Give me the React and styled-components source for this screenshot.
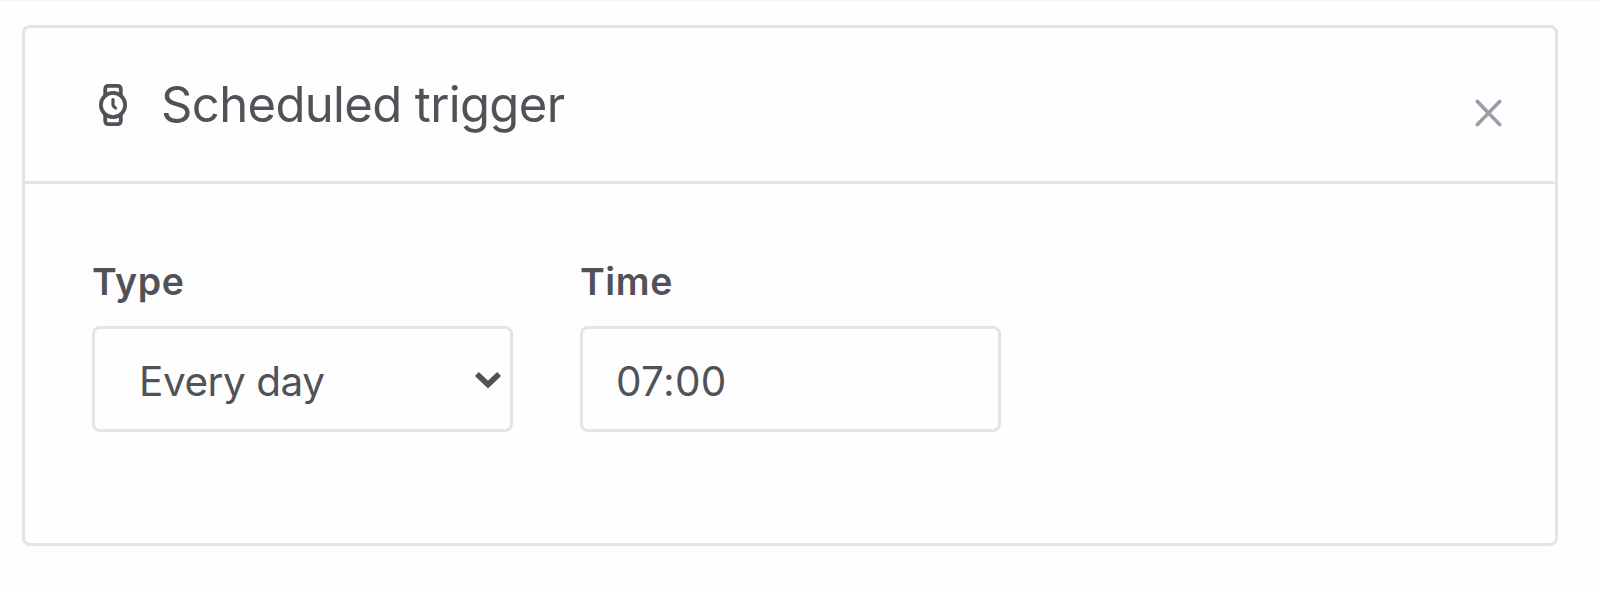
import React from "react";
import styled, { createGlobalStyle } from "styled-components";

const GlobalStyle = createGlobalStyle`
  *, *::before, *::after { box-sizing: border-box; }
  body {
    margin: 0;
    background: #fefefe;
    color: #505258;
    font-family: Inter, "Liberation Sans", sans-serif;
  }
`;

const Page = styled.main`
  height: 591px;
  padding: 24px 42px 0 22px;
  border-top: 1px solid #f6f6f6;
  border-bottom: 1px solid #f8f8f8;
`;

const Card = styled.section`
  height: 521px;
  border: 3px solid #e3e4e8;
  border-radius: 8px;
`;

const CardHeader = styled.header`
  display: flex;
  align-items: center;
  height: 156px;
  padding: 1px 52px 0 72px;
  border-bottom: 3px solid #e3e4e8;
`;

const Title = styled.h1`
  flex: 1;
  margin: 0 0 0 32px;
  font-size: 49px;
  font-weight: 400;
  line-height: 60px;
  letter-spacing: ${(p) => p.$tracking};
  white-space: nowrap;
`;

const CloseButton = styled.button`
  display: flex;
  margin: 15px 0 0;
  padding: 0;
  border: 0;
  background: none;
  color: #9c9da8;
`;

const Fields = styled.div`
  display: flex;
  gap: 67px;
  padding: 74px 67px 0;
`;

const Field = styled.div`
  width: 421px;
`;

const Label = styled.div`
  margin-bottom: 20px;
  font-size: 37.5px;
  font-weight: 600;
  line-height: 48px;
  letter-spacing: ${(p) => p.$tracking};
`;

const Control = styled.div`
  display: flex;
  align-items: center;
  justify-content: space-between;
  height: 106px;
  padding: 5px 8px 0 ${(p) => p.$inset};
  border: 3px solid #e2e4ea;
  border-radius: 8px;
  font-size: 40.5px;
  line-height: 50px;
  letter-spacing: ${(p) => p.$tracking};
  white-space: nowrap;

  svg {
    margin-bottom: 4px;
  }
`;

const WatchIcon = () => (
  <svg width="32" height="44" viewBox="0 0 32 44" fill="none" stroke="currentColor" strokeWidth="3.8" strokeLinecap="round" strokeLinejoin="round">
    <circle cx="16" cy="22" r="12.1" />
    <path d="M8.2 12.5V6Q8.4 2.8 11.6 2.8H20.4Q23.6 2.8 23.8 6V12.5" />
    <path d="M8.2 31.5V38Q8.4 41.2 11.6 41.2H20.4Q23.6 41.2 23.8 38V31.5" />
    <path d="M16 16.5V22Q16 23.2 18.5 25" strokeWidth="3.2" />
  </svg>
);

const CloseIcon = () => (
  <svg width="28" height="28" viewBox="0 0 28 28" fill="none" stroke="currentColor" strokeWidth="3.6" strokeLinecap="round">
    <path d="M2.4 2.4 24.6 25.6M24.6 2.4 2.4 25.6" />
  </svg>
);

const ChevronIcon = () => (
  <svg width="28" height="18" viewBox="0 0 28 18" fill="none" stroke="currentColor" strokeWidth="5.6">
    <path d="M2.9 2.9 14 13.6 25.1 2.9" />
  </svg>
);

export default function App() {
  return (
    <>
      <GlobalStyle />
      <Page>
        <Card>
          <CardHeader>
            <WatchIcon />
            <Title $tracking="-0.64px">Scheduled trigger</Title>
            <CloseButton aria-label="Close">
              <CloseIcon />
            </CloseButton>
          </CardHeader>
          <Fields>
            <Field>
              <Label $tracking="0.6px">Type</Label>
              <Control $inset="44px" $tracking="-0.45px">
                Every day
                <ChevronIcon />
              </Control>
            </Field>
            <Field>
              <Label $tracking="0.6px">Time</Label>
              <Control $inset="33px" $tracking="0.3px">07:00</Control>
            </Field>
          </Fields>
        </Card>
      </Page>
    </>
  );
}
